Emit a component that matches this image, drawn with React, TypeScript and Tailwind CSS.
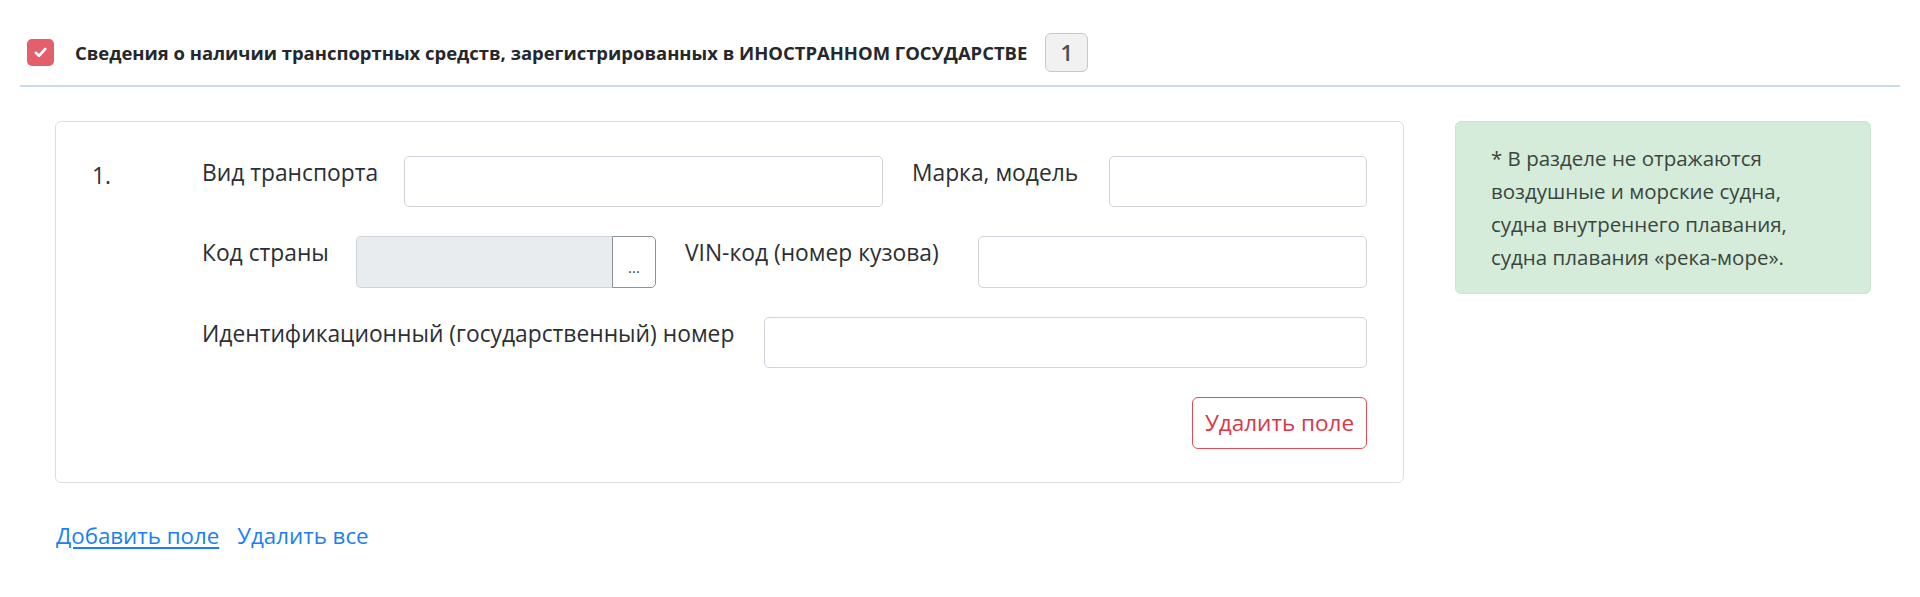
import React from 'react';

const labelCls = 'shrink-0 text-[22.8px] leading-[33px] text-[#2b2f33] whitespace-nowrap';
const inputCls =
  'h-[51px] rounded-[5px] border border-[#ced4da] bg-white px-3 text-[22px] text-[#495057] outline-none';

export default function App() {
  return (
    <div className="min-h-screen bg-white px-[20px] font-['Open_Sans','Liberation_Sans',sans-serif]">
      {/* Header */}
      <div className="flex items-center border-b-2 border-[#c4ddef] pl-[7px] pt-[33px] pb-[13px]">
        <span className="flex h-[27px] w-[27px] shrink-0 items-center justify-center rounded-[5px] bg-[#e35f6c]">
          <svg width="13" height="11" viewBox="0 0 13 11" fill="none">
            <path d="M1.8 5.8 L5 8.8 L11.2 2" stroke="white" strokeWidth="2.6" strokeLinecap="round" strokeLinejoin="round" />
          </svg>
        </span>
        <h2 className="ml-[21px] text-[18.45px] font-bold text-[#24272b]">
          Сведения о наличии транспортных средств, зарегистрированных в ИНОСТРАННОМ ГОСУДАРСТВЕ
        </h2>
        <span className="ml-[18px] flex h-[39px] w-[43px] shrink-0 items-center justify-center rounded-[6px] border border-[#c6c8ca] bg-[#f1f1f1] text-[22px] font-semibold text-[#4a4f55]">
          1
        </span>
      </div>

      {/* Content */}
      <div className="flex items-start gap-[51px] pl-[35px] pt-[34px]">
        <div className="w-[1349px] shrink-0 rounded-[6px] border border-[#dcdfe2] px-[36px] pt-[34px] pb-[33px]">
          <div className="flex">
            <div className="w-[110px] shrink-0 pt-[3px] text-[22.8px] leading-[33px] text-[#2b2f33]">1.</div>
            <div className="flex min-w-0 flex-1 flex-col gap-[29px]">
              {/* Row 1 */}
              <div className="flex items-start gap-[29px]">
                <label className={`${labelCls} w-[173px]`}>Вид транспорта</label>
                <input type="text" className={`${inputCls} w-[479px] shrink-0`} />
                <label className={`${labelCls} w-[168px]`}>Марка, модель</label>
                <input type="text" className={`${inputCls} min-w-0 flex-1`} />
              </div>

              {/* Row 2 */}
              <div className="flex items-start gap-[29px]">
                <label className={`${labelCls} w-[125px]`}>Код страны</label>
                <div className="flex h-[52px] w-[300px] shrink-0">
                  <input
                    type="text"
                    disabled
                    className="h-full min-w-0 flex-1 rounded-l-[5px] border border-r-0 border-[#ced4da] bg-[#e9ecef] px-3 outline-none"
                  />
                  <button
                    type="button"
                    className="flex h-full w-[44px] items-end justify-center rounded-r-[5px] border border-[#8d9297] bg-white pb-[12px] text-[15px] leading-none text-[#444]"
                  >
                    ...
                  </button>
                </div>
                <label className={`${labelCls} w-[264px]`}>VIN-код (номер кузова)</label>
                <input type="text" className={`${inputCls} h-[52px] min-w-0 flex-1`} />
              </div>

              {/* Row 3 */}
              <div className="flex items-start gap-[29px]">
                <label className={`${labelCls} w-[533px]`}>Идентификационный (государственный) номер</label>
                <input type="text" className={`${inputCls} h-[50px] min-w-0 flex-1`} />
              </div>

              {/* Delete */}
              <div className="flex justify-end">
                <button
                  type="button"
                  className="h-[52px] w-[175px] rounded-[6px] border border-[#e24b58] bg-white text-[22.5px] text-[#dc3545]"
                >
                  Удалить поле
                </button>
              </div>
            </div>
          </div>
        </div>

        {/* Note */}
        <div className="w-[416px] shrink-0 rounded-[6px] border border-[#c8e6cf] bg-[#d4ecd9] px-[35px] pt-[20px] pb-[19px] text-[20.5px] leading-[33px] text-[#3b4540]">
          * В разделе не отражаются
          <br />
          воздушные и морские судна,
          <br />
          судна внутреннего плавания,
          <br />
          судна плавания «река-море».
        </div>
      </div>

      {/* Links */}
      <div className="flex gap-[18px] pl-[36px] pt-[36px] text-[22.3px] leading-[33px] text-[#1a7ff5]">
        <a href="#" className="underline underline-offset-[3px]">Добавить поле</a>
        <a href="#">Удалить все</a>
      </div>
    </div>
  );
}
